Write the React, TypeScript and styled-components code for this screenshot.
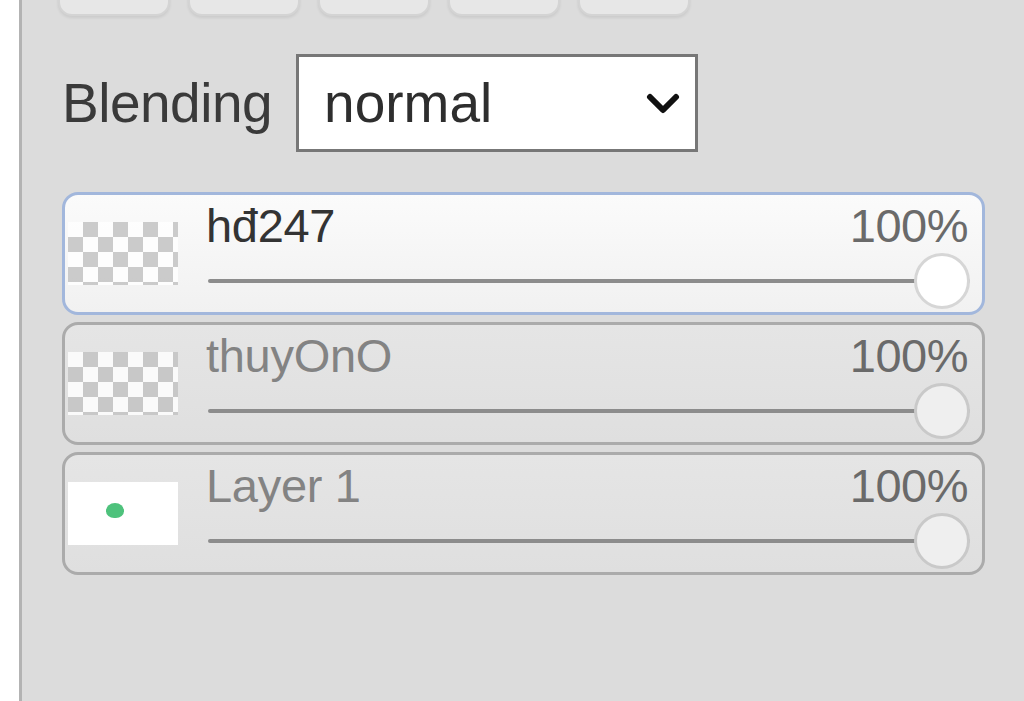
import styled, { createGlobalStyle } from "styled-components"

const GlobalStyle = createGlobalStyle`
  html, body {
    margin: 0;
    padding: 0;
    background: #ffffff;
    overflow: hidden;
  }
  body {
    font-family: "Liberation Sans", Arial, sans-serif;
  }
`

const Page = styled.div`
  display: flex;
  width: 1024px;
  height: 701px;
`

const Gutter = styled.div`
  width: 19px;
  background: #ffffff;
`

const Panel = styled.div`
  flex: 1;
  display: flex;
  flex-direction: column;
  background: #dcdcdc;
  border-left: 3px solid #b3b3b3;
  padding: 0 39px 0 40px;
  overflow: hidden;
`

const Toolbar = styled.div`
  display: flex;
  gap: 18px;
  margin: -40px 0 0 -4px;
`

const ToolButton = styled.button`
  width: 112px;
  height: 56px;
  border: 2px solid #d4d4d4;
  border-radius: 14px;
  background: #e7e7e7;
  box-shadow: 0 2px 3px rgba(0, 0, 0, 0.08);
`

const BlendRow = styled.div`
  display: flex;
  align-items: center;
  gap: 24px;
  margin-top: 38px;
`

const Label = styled.span`
  font-size: 55px;
  color: #3a3a3a;
  letter-spacing: -0.5px;
`

const SelectWrap = styled.div`
  position: relative;
  width: 402px;
  height: 98px;
`

const Select = styled.select`
  appearance: none;
  width: 100%;
  height: 100%;
  box-sizing: border-box;
  border: 3px solid #777777;
  border-radius: 0;
  background: #ffffff;
  padding: 0 0 0 25px;
  font-family: "Liberation Sans", Arial, sans-serif;
  font-size: 55px;
  color: #2e2e2e;
  outline: none;
`

const Chevron = styled.svg`
  position: absolute;
  right: 18px;
  top: 38px;
  pointer-events: none;
`

const LayerList = styled.div`
  display: flex;
  flex-direction: column;
  gap: 7px;
  margin-top: 40px;
`

const LayerRow = styled.div<{ $active?: boolean }>`
  display: flex;
  align-items: center;
  gap: 28px;
  height: 123px;
  box-sizing: border-box;
  padding: 0 15px 0 3px;
  border: 3px solid ${(p) => (p.$active ? "#a2b7dc" : "#ababab")};
  border-radius: 16px;
  background: ${(p) =>
    p.$active
      ? "linear-gradient(#fbfbfb, #f1f1f1)"
      : "linear-gradient(#e5e5e5, #dfdfdf)"};
`

const Thumb = styled.div<{ $checker?: boolean }>`
  width: 110px;
  height: 63px;
  flex-shrink: 0;
  display: flex;
  align-items: center;
  padding-left: 38px;
  box-sizing: border-box;
  background-color: #ffffff;
  background-image: ${(p) =>
    p.$checker
      ? "conic-gradient(#c4c4c4 25%, #ffffff 0 50%, #c4c4c4 0 75%, #ffffff 0)"
      : "none"};
  background-size: 30px 30px;
  opacity: ${(p) => (p.$checker ? 0.85 : 1)};
`

const Dot = styled.div`
  width: 18px;
  height: 15px;
  border-radius: 50% 50% 45% 45%;
  background: #4ec27c;
  margin-top: -6px;
`

const LayerBody = styled.div`
  flex: 1;
  display: flex;
  flex-direction: column;
  padding-top: 3px;
`

const NameLine = styled.div`
  display: flex;
  justify-content: space-between;
  height: 52px;
  line-height: 52px;
  font-size: 47px;
`

const LayerName = styled.span<{ $active?: boolean }>`
  color: ${(p) => (p.$active ? "#333333" : "#838383")};
  letter-spacing: -0.3px;
`

const Percent = styled.span`
  color: #6a6a6a;
  letter-spacing: -0.5px;
  margin-right: 2px;
`

const Range = styled.input<{ $active?: boolean }>`
  appearance: none;
  -webkit-appearance: none;
  width: 762px;
  height: 58px;
  margin: 0 0 0 2px;
  background: transparent;

  &::-webkit-slider-runnable-track {
    height: 4px;
    background: #8c8c8c;
    border-radius: 2px;
  }
  &::-webkit-slider-thumb {
    -webkit-appearance: none;
    width: 56px;
    height: 56px;
    margin-top: -26px;
    border-radius: 50%;
    box-sizing: border-box;
    border: 3px solid ${(p) => (p.$active ? "#d6d6d6" : "#c9c9c9")};
    background: ${(p) => (p.$active ? "#ffffff" : "#efefef")};
  }
`

type Layer = { name: string; checker: boolean; active?: boolean }

const layers: Layer[] = [
  { name: "hđ247", checker: true, active: true },
  { name: "thuyOnO", checker: true },
  { name: "Layer 1", checker: false },
]

export default function App() {
  return (
    <>
      <GlobalStyle />
      <Page>
        <Gutter />
        <Panel>
          <Toolbar>
            {[0, 1, 2, 3, 4].map((i) => (
              <ToolButton key={i} />
            ))}
          </Toolbar>
          <BlendRow>
            <Label>Blending</Label>
            <SelectWrap>
              <Select defaultValue="normal">
                <option value="normal">normal</option>
                <option value="multiply">multiply</option>
                <option value="screen">screen</option>
              </Select>
              <Chevron width="34" height="24" viewBox="0 0 34 24">
                <path
                  d="M4 5 L17 18 L30 5"
                  fill="none"
                  stroke="#111"
                  strokeWidth="6"
                  strokeLinecap="round"
                  strokeLinejoin="round"
                />
              </Chevron>
            </SelectWrap>
          </BlendRow>
          <LayerList>
            {layers.map((l) => (
              <LayerRow key={l.name} $active={l.active}>
                <Thumb $checker={l.checker}>{!l.checker && <Dot />}</Thumb>
                <LayerBody>
                  <NameLine>
                    <LayerName $active={l.active}>{l.name}</LayerName>
                    <Percent>100%</Percent>
                  </NameLine>
                  <Range
                    type="range"
                    min={0}
                    max={100}
                    defaultValue={100}
                    $active={l.active}
                  />
                </LayerBody>
              </LayerRow>
            ))}
          </LayerList>
        </Panel>
      </Page>
    </>
  )
}
